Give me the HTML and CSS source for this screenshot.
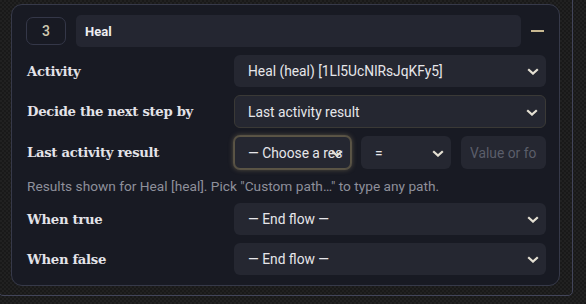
FILE: index.html
```html
<!DOCTYPE html>
<html>
<head>
<meta charset="utf-8">
<link rel="stylesheet" href="styles.css">
</head>
<body>
<div class="frame">
  <div class="card">
    <div class="head">
      <div class="num">3</div>
      <div class="name">Heal</div>
      <div class="collapse"><span class="minus"></span></div>
    </div>
    <div class="form">
      <div class="label">Activity</div>
      <div class="select"><span class="val">Heal (heal) [1Ll5UcNlRsJqKFy5]</span><svg class="chev" viewBox="0 0 12 7"><path d="M1.2 1.2 6 5.6 10.8 1.2"/></svg></div>

      <div class="label">Decide the next step by</div>
      <div class="select bordered"><span class="val">Last activity result</span><svg class="chev" viewBox="0 0 12 7"><path d="M1.2 1.2 6 5.6 10.8 1.2"/></svg></div>

      <div class="label">Last activity result</div>
      <div class="triple">
        <div class="select focused"><span class="val clip">— Choose a result</span><svg class="chev" viewBox="0 0 12 7"><path d="M1.2 1.2 6 5.6 10.8 1.2"/></svg></div>
        <div class="select"><span class="val">=</span><svg class="chev" viewBox="0 0 12 7"><path d="M1.2 1.2 6 5.6 10.8 1.2"/></svg></div>
        <div class="input"><span class="ph">Value or formula</span></div>
      </div>

      <div class="help">Results shown for Heal [heal]. Pick "Custom path…" to type any path.</div>

      <div class="label">When true</div>
      <div class="select"><span class="val">— End flow —</span><svg class="chev" viewBox="0 0 12 7"><path d="M1.2 1.2 6 5.6 10.8 1.2"/></svg></div>

      <div class="label">When false</div>
      <div class="select"><span class="val">— End flow —</span><svg class="chev" viewBox="0 0 12 7"><path d="M1.2 1.2 6 5.6 10.8 1.2"/></svg></div>
    </div>
  </div>
</div>
</body>
</html>
```
FILE: styles.css
```css
html, body {
  margin: 0;
  padding: 0;
  overflow: hidden;
}
body {
  width: 586px;
  height: 304px;
  background-color: #1c1c1c;
  background-image: repeating-conic-gradient(#191919 0 25%, #212121 0 50%);
  background-size: 4px 4px;
  font-family: Roboto, "Noto Sans", sans-serif;
}
.frame {
  box-sizing: border-box;
  width: 575px;
  margin: -10px 0 0 -2px;
  border: 1px solid #42455a;
  border-radius: 5px;
  padding: 13px 12px 9px 12px;
}
.card {
  background: #181a23;
  border: 1px solid #363949;
  border-radius: 11px;
  padding: 10px 13px 10px 14px;
}
.head {
  display: flex;
  align-items: center;
  height: 32px;
  margin-bottom: 8px;
}
.num {
  box-sizing: border-box;
  width: 40px;
  height: 28px;
  border: 1px solid #343748;
  border-radius: 7px;
  display: flex;
  align-items: center;
  justify-content: center;
  color: #d0c9b0;
  font-size: 14px;
  font-weight: 500;
}
.name {
  flex: 1;
  height: 32px;
  margin-left: 10px;
  background: #242631;
  border-radius: 5px;
  display: flex;
  align-items: center;
  padding-left: 9px;
  color: #eeeef2;
  font-weight: 700;
  font-size: 13px;
}
.collapse {
  width: 25px;
  display: flex;
  align-items: center;
}
.minus {
  display: block;
  width: 13px;
  height: 2px;
  margin-left: 10px;
  background: #c8b891;
}
.form {
  display: grid;
  grid-template-columns: 208px 1fr;
  row-gap: 8px;
  align-items: center;
}
.label {
  font-family: "DejaVu Serif", "Liberation Serif", serif;
  font-weight: 700;
  font-size: 13.2px;
  letter-spacing: -0.3px;
  color: #e3e3e8;
  padding-left: 1px;
}
.select, .input {
  position: relative;
  box-sizing: border-box;
  height: 32px;
  background: #252731;
  border-radius: 6px;
  display: flex;
  align-items: center;
  padding: 0 28px 0 14px;
  color: #e6e6ea;
  font-size: 13.8px;
  overflow: hidden;
  white-space: nowrap;
}
.val {
  overflow: hidden;
}
.bordered {
  border: 1px solid #3a3936;
  height: 33px;
  padding-left: 13px;
}
.focused {
  border: 1px solid #5b5545;
  box-shadow: 0 0 0 1px rgba(120, 110, 85, 0.5), 0 0 5px 1px rgba(190, 170, 120, 0.35);
  height: 33px;
  padding-left: 13px;
  padding-right: 0;
  overflow: visible;
}
.clip {
  width: 95px;
  flex: none;
}
.chev {
  position: absolute;
  right: 7px;
  top: 50%;
  width: 12px;
  height: 7px;
  margin-top: -3px;
  fill: none;
  stroke: #e4dfd2;
  stroke-width: 2.2;
}
.triple {
  display: grid;
  grid-template-columns: 117px 90px 1fr;
  column-gap: 10px;
  height: 33px;
}
.triple .select, .triple .input {
  height: 33px;
}
.input {
  padding: 0 9px 0 9px;
}
.ph {
  color: #5b5e6a;
  overflow: hidden;
}
.help {
  grid-column: 1 / 3;
  height: 18px;
  line-height: 18px;
  font-size: 13.7px;
  color: #8e909b;
  padding-left: 1px;
}
```
